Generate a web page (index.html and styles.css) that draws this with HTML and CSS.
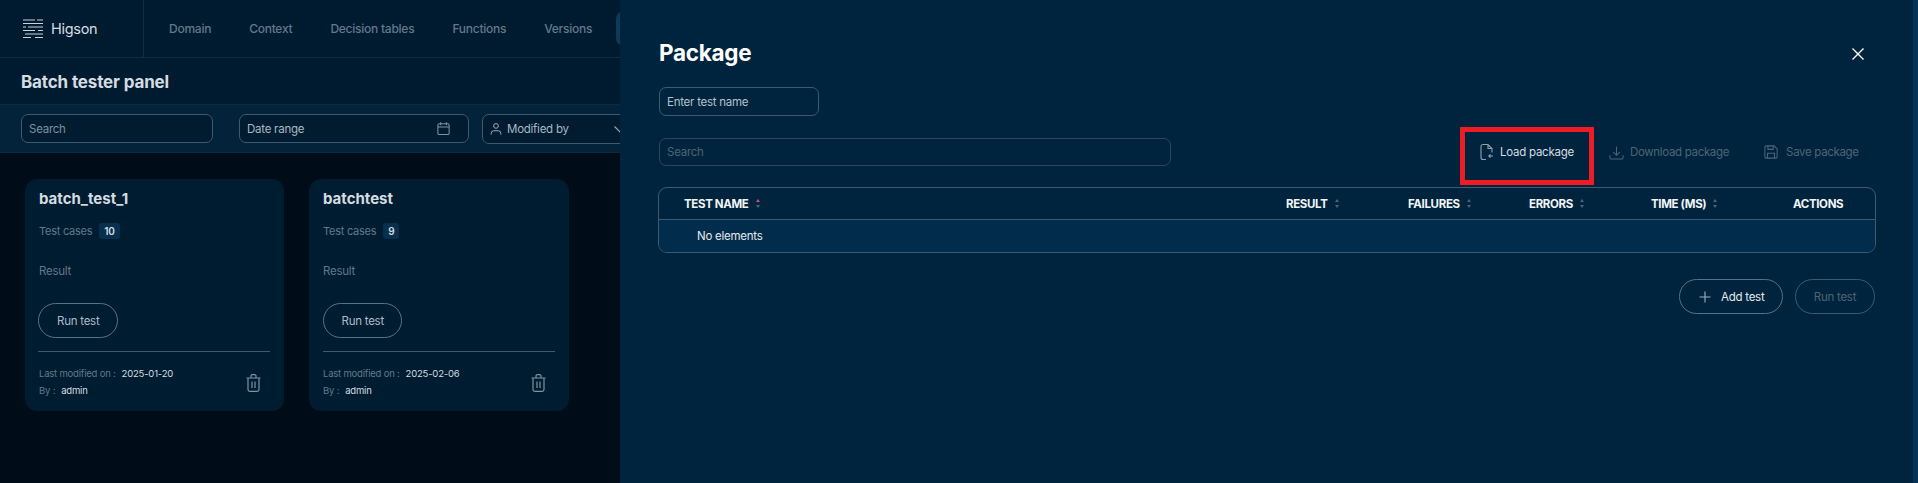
FILE: index.html
```html
<!DOCTYPE html>
<html lang="en">
<head>
<meta charset="utf-8">
<title>Batch tester panel</title>
<link rel="stylesheet" href="styles.css">
</head>
<body>
<div class="page">
  <header class="topbar">
    <div class="brand">
      <svg class="logo" viewBox="0 0 22 20" width="22" height="20" fill="none" stroke="#c9d2d9" stroke-width="1.100">
        <path d="M1 1h12M15 1h6M1 4.500h20M6 8h15M1 8h3M1 11.500h12M16 11.500h5M3 15h18M1 18.500h8M13 18.500h8"/>
      </svg>
      <span class="brand-name">Higson</span>
    </div>
    <nav class="nav">
      <a>Domain</a><a>Context</a><a>Decision tables</a><a>Functions</a><a>Versions</a><a class="nav-active">Batch tester</a>
    </nav>
  </header>
  <div class="titlebar"><h1>Batch tester panel</h1></div>
  <div class="filters">
    <div class="field field-search">Search</div>
    <div class="field field-date"><span>Date range</span>
      <svg viewBox="0 0 16 16" width="15" height="15" fill="none" stroke="#7f93a3" stroke-width="1.100"><rect x="2" y="3" width="12" height="11.500" rx="1.500"/><path d="M2 6.500h12M5 1.200v3.200M11 1.200v3.200"/></svg>
    </div>
    <div class="field field-user">
      <svg viewBox="0 0 16 16" width="14" height="14" fill="none" stroke="#9fb0bd" stroke-width="1.100"><circle cx="8" cy="4.500" r="2.700"/><path d="M2.500 14.500v-1.500a3 3 0 0 1 3-3h5a3 3 0 0 1 3 3v1.500"/></svg>
      <span>Modified by</span>
      <svg class="chevron" viewBox="0 0 12 7" width="12" height="7" fill="none" stroke="#8ea1b0" stroke-width="1.200"><path d="M.5.500L6 6l5.500-5.500"/></svg>
    </div>
  </div>
  <main class="cards">
    <article class="card">
      <h2>batch_test_1</h2>
      <p class="cases">Test cases <b class="badge">10</b></p>
      <p class="result">Result</p>
      <button class="pill">Run test</button>
      <footer class="card-foot">
        <div class="meta">
          <p>Last modified on :<span class="val val-date">2025-01-20</span></p>
          <p>By :<span class="val">admin</span></p>
        </div>
        <svg class="trash" viewBox="0 0 15 18" width="15" height="18" fill="none" stroke="#7d92a3" stroke-width="1.200"><path d="M.5 4h14M5 4V2A1.300 1.300 0 0 1 6.300.7h2.400A1.300 1.300 0 0 1 10 2v2M2 4v11.500A1.800 1.800 0 0 0 3.800 17.300h7.400a1.800 1.800 0 0 0 1.800-1.800V4M6 7.500v6.500M9 7.500v6.500"/></svg>
      </footer>
    </article>
    <article class="card card-wide">
      <h2>batchtest</h2>
      <p class="cases">Test cases <b class="badge">9</b></p>
      <p class="result">Result</p>
      <button class="pill">Run test</button>
      <footer class="card-foot">
        <div class="meta">
          <p>Last modified on :<span class="val val-date">2025-02-06</span></p>
          <p>By :<span class="val">admin</span></p>
        </div>
        <svg class="trash" viewBox="0 0 15 18" width="15" height="18" fill="none" stroke="#7d92a3" stroke-width="1.200"><path d="M.5 4h14M5 4V2A1.300 1.300 0 0 1 6.300.7h2.400A1.300 1.300 0 0 1 10 2v2M2 4v11.500A1.800 1.800 0 0 0 3.800 17.300h7.400a1.800 1.800 0 0 0 1.800-1.800V4M6 7.500v6.500M9 7.500v6.500"/></svg>
      </footer>
    </article>
  </main>
</div>

<aside class="drawer">
  <div class="drawer-head">
    <h2>Package</h2>
    <svg class="close" viewBox="0 0 14 14" width="14" height="14" fill="none" stroke="#fff" stroke-width="1.400"><path d="M1.500 1.500l11 11M12.500 1.500l-11 11"/></svg>
  </div>
  <div class="field name-field">Enter test name</div>
  <div class="toolbar">
    <div class="field search-field">Search</div>
    <div class="actions">
      <div class="action action-load">
        <svg viewBox="0 0 14 18" width="14" height="18" fill="none" stroke="#8ea1b0" stroke-width="1.100"><path d="M6 16.500H3a2 2 0 0 1-2-2v-11a2 2 0 0 1 2-2h5l4 4v4M8 1.500v4h4M13 13H9M10.500 11.300L8.800 13l1.700 1.700"/></svg>
        <span>Load package</span>
      </div>
      <div class="action action-off">
        <svg viewBox="0 0 16 16" width="15" height="15" fill="none" stroke="#4c6478" stroke-width="1.100"><path d="M8 1.500v9M4.500 7.500L8 11l3.500-3.500M1 11v2.500a1.500 1.500 0 0 0 1.500 1.500h11a1.500 1.500 0 0 0 1.500-1.500V11"/></svg>
        <span>Download package</span>
      </div>
      <div class="action action-off action-save">
        <svg viewBox="0 0 16 16" width="14" height="14" fill="none" stroke="#4c6478" stroke-width="1.200"><path d="M1 2.500A1.500 1.500 0 0 1 2.500 1h9L15 4.500v9a1.500 1.500 0 0 1-1.500 1.500h-11A1.500 1.500 0 0 1 1 13.500zM4.500 1v4h6V1M4 15V9.500h8V15"/></svg>
        <span>Save package</span>
      </div>
    </div>
    <div class="highlight"></div>
  </div>
  <div class="table">
    <div class="thead">
      <div class="th">TEST NAME<i class="sort sort-on"></i></div>
      <div class="th">RESULT<i class="sort"></i></div>
      <div class="th">FAILURES<i class="sort"></i></div>
      <div class="th">ERRORS<i class="sort"></i></div>
      <div class="th">TIME (MS)<i class="sort"></i></div>
      <div class="th">ACTIONS</div>
    </div>
    <div class="tbody">No elements</div>
  </div>
  <div class="drawer-foot">
    <button class="pill pill-add">
      <svg viewBox="0 0 12 12" width="12" height="12" fill="none" stroke="#9fb0bd" stroke-width="1.100"><path d="M6 .5v11M.5 6h11"/></svg>
      Add test
    </button>
    <button class="pill pill-off">Run test</button>
  </div>
</aside>
</body>
</html>
```
FILE: styles.css
```css
* { box-sizing: border-box; }
html, body { margin: 0; height: 483px; overflow: hidden; }
body {
  background: #000c17;
  font-family: "Inter", "Liberation Sans", sans-serif;
  font-size: 11.500px;
  letter-spacing: -.25px;
  color: #c9d2d9;
  position: relative;
}
p, h1, h2 { margin: 0; }

.page { height: 483px; }

.topbar {
  height: 58px;
  background: #001b2f;
  border-bottom: 1px solid #0d2f49;
  display: flex;
}
.brand {
  width: 144px;
  border-right: 1px solid #0d2f49;
  display: flex;
  align-items: center;
  padding-left: 22px;
  gap: 7px;
}
.brand-name { font-size: 14.500px; color: #d5dce1; letter-spacing: -.3px; }
.nav { display: flex; align-items: center; gap: 38px; padding-left: 25px; }
.nav a { color: #62798a; font-weight: 500; font-size: 12px; }
.nav a.nav-active {
  background: #0f3a58;
  color: #fff;
  height: 35px;
  display: flex;
  align-items: center;
  padding: 0 14px;
  border-radius: 8px;
  margin-left: -14px;
}

.titlebar {
  height: 47px;
  background: #001b2f;
  border-bottom: 1px solid #0a2a42;
  padding: 13px 21px 0;
}
.titlebar h1 { font-size: 17px; line-height: 22px; font-weight: 700; color: #d5dce1; letter-spacing: -.15px; }

.filters {
  height: 48px;
  background: #02233a;
  border-bottom: 1px solid #0a2a42;
  display: flex;
  align-items: flex-start;
  padding: 9px 0 0 21px;
}
.field {
  height: 29px;
  border: 1px solid #3d5a73;
  border-radius: 7px;
  background: #011c31;
  display: flex;
  align-items: center;
  color: #a9b7c2;
  padding: 0 7px;
}
.field-search { width: 192px; color: #7d909f; }
.field-date { width: 230px; margin-left: 26px; justify-content: space-between; padding-right: 17px; }
.field-user { width: 260px; margin-left: 13px; gap: 4px; height: 30px; padding-left: 6px; }
.chevron { margin-left: 41px; }

.cards { display: flex; gap: 25px; padding: 26px 0 0 25px; }
.card {
  width: 259px;
  height: 232px;
  background: #001c30;
  border-radius: 12px;
  padding: 10px 14px 0 13px;
  display: flex;
  flex-direction: column;
  align-items: flex-start;
}
.card h2 { font-size: 15px; line-height: 20px; font-weight: 700; color: #d5dce1; letter-spacing: 0; padding-left: 1px; }
.cases { margin-top: 12px; height: 20px; display: flex; align-items: center; gap: 7px; color: #62798a; padding-left: 1px; font-size: 11px; }
.badge {
  background: #06304e;
  color: #d5dce1;
  font-size: 10px;
  font-weight: 600;
  padding: 0 5px;
  height: 16px;
  line-height: 16px;
  border-radius: 3px;
}
.result { margin-top: 20px; line-height: 20px; color: #62798a; padding-left: 1px; }
.pill {
  height: 35px;
  padding: 0 18px;
  border: 1px solid #5a7186;
  border-radius: 18px;
  background: transparent;
  color: #aebbc6;
  font: inherit;
  letter-spacing: inherit;
  display: inline-flex;
  align-items: center;
}
.card .pill { margin-top: 22px; }
.card-foot {
  margin-top: 13px;
  width: 100%;
  border-top: 1px solid #3d5a73;
  display: flex;
  justify-content: space-between;
  align-items: flex-start;
  padding: 13px 9px 0 1px;
}
.meta p { font-size: 9.500px; line-height: 17px; color: #62798a; letter-spacing: -.2px; }
.val { color: #d5dce1; margin-left: 6px; }
.trash { margin-top: 9px; }

.card-wide { width: 260px; padding-left: 14px; }
.card-wide h2, .card-wide .cases, .card-wide .result { padding-left: 0; }
.card-wide .card-foot { padding-left: 0; }
.card-wide .pill { padding: 0 17.500px; }

.drawer {
  position: absolute;
  top: 0;
  right: 0;
  bottom: 0;
  width: 1298px;
  background: #00243d;
  padding: 0 36px 0 38px;
  border-right: 5px solid #033354;
}
.drawer-head {
  height: 87px;
  display: flex;
  justify-content: space-between;
  padding: 35px 12px 0 1px;
}
.drawer-head h2 { font-size: 22.500px; line-height: 36px; font-weight: 700; color: #fff; letter-spacing: -.3px; }
.close { margin-top: 12px; }
.drawer .field { background: transparent; }
.name-field { width: 160px; margin-left: 1px; color: #b4c0ca; }
.toolbar {
  position: relative;
  margin-top: 22px;
  height: 28px;
  display: flex;
  padding-left: 1px;
}
.drawer .search-field { width: 512px; height: 28px; color: #4c6478; border-color: #2a4660; }
.actions { position: absolute; top: 0; left: 822px; height: 28px; display: flex; align-items: center; gap: 35px; }
.action { display: flex; align-items: center; gap: 6px; color: #d5dce1; }
.action-off { color: #4c6478; letter-spacing: -.33px; }
.action-save { gap: 8px; }
.highlight {
  position: absolute;
  left: 802px;
  top: -11px;
  width: 134px;
  height: 58px;
  border: 5px solid #ee1c25;
}
.table {
  margin-top: 21px;
  width: 1218px;
  border: 1px solid #3d5a73;
  border-radius: 9px;
  overflow: hidden;
}
.thead {
  height: 32px;
  border-bottom: 1px solid #3d5a73;
  display: grid;
  grid-template-columns: 602px 122px 121px 122px 142px 1fr;
  padding-left: 25px;
  align-items: center;
}
.th { font-size: 11.500px; font-weight: 700; color: #f2f5f7; letter-spacing: -.35px; display: flex; align-items: center; gap: 7px; }
.sort { position: relative; width: 5px; height: 9px; }
.sort::before, .sort::after {
  content: "";
  position: absolute;
  left: 0;
  border-left: 2.500px solid transparent;
  border-right: 2.500px solid transparent;
}
.sort::before { top: 0; border-bottom: 3.500px solid #4c6478; }
.sort::after { bottom: 0; border-top: 3.500px solid #4c6478; }
.sort-on::before { border-bottom-color: #e0409a; }
.tbody {
  height: 32px;
  background: #022c4c;
  display: flex;
  align-items: center;
  padding-left: 38px;
  color: #e4e9ed;
}
.drawer-foot { display: flex; justify-content: flex-end; gap: 12px; margin-top: 26px; width: 1218px; padding-right: 1px; }
.pill-add { width: 104px; gap: 10px; padding: 0 0 0 19px; color: #e4e9ed; }
.pill-off { width: 80px; justify-content: center; padding: 0; color: #4c6478; border-color: #3d5a73; }
```
